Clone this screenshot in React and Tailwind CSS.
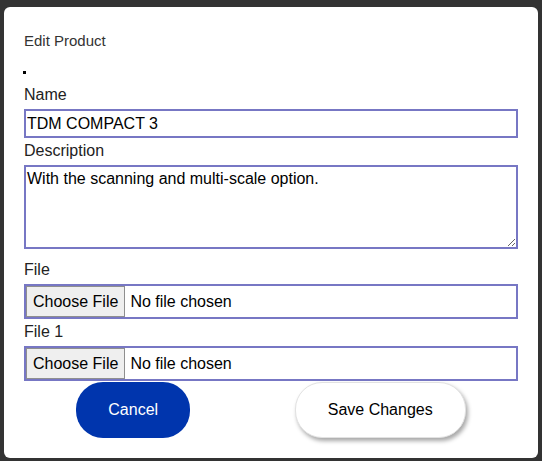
import React from 'react';

const Label = ({ children, className = '' }) => (
    <label className={`block text-[16px] leading-[18px] text-[#222] ${className}`}>{children}</label>
);

const FileField = ({ className = '' }) => (
    <div className={`flex items-center h-[35px] border-2 border-[#7777c4] bg-white ${className}`}>
        <button
            type="button"
            className="h-full px-[6px] bg-[#efefef] border border-[#8f8f8f] text-[16px] leading-[18px] text-black"
        >
            Choose File
        </button>
        <span className="ml-[5px] text-[16px] leading-[18px] text-black">No file chosen</span>
    </div>
);

const App = () => {
    return (
        <div className="w-full h-[461px] bg-[#333] pt-[7px] px-[4px] font-['Liberation_Sans',Arial,sans-serif]">
            <div className="w-[534px] h-[451px] bg-white rounded-md px-5 pt-[25px] flex flex-col">
                <h2 className="text-[15px] leading-[17px] text-[#333] font-normal">Edit Product</h2>
                <div className="w-[3px] h-[3px] bg-black mt-[22px] -ml-px" />

                <Label className="mt-[12px]">Name</Label>
                <input
                    type="text"
                    defaultValue="TDM COMPACT 3"
                    className="mt-[5px] h-[29px] w-full border-2 border-[#7777c4] px-[1px] text-[16px] leading-[18px] text-black outline-none"
                />

                <Label className="mt-[4px]">Description</Label>
                <textarea
                    defaultValue="With the scanning and multi-scale option."
                    className="mt-[5px] h-[84px] w-full border-2 border-[#7777c4] px-[1px] py-[3px] text-[16px] leading-[18px] text-black outline-none"
                />

                <Label className="mt-[12px]">File</Label>
                <FileField className="mt-[5px]" />

                <Label className="mt-[4px]">File 1</Label>
                <FileField className="mt-[5px]" />

                <div className="mt-[1px] flex justify-around">
                    <button
                        type="button"
                        className="h-[56px] px-8 rounded-[27px] bg-[#0035ad] text-white text-[16px] leading-[18px]"
                    >
                        Cancel
                    </button>
                    <button
                        type="button"
                        className="h-[56px] px-8 rounded-[27px] bg-white border border-[#e2e2e2] text-black text-[16px] leading-[18px] shadow-[2px_3px_4px_rgba(0,0,0,0.35)]"
                    >
                        Save Changes
                    </button>
                </div>
            </div>
        </div>
    );
};

export default App;
